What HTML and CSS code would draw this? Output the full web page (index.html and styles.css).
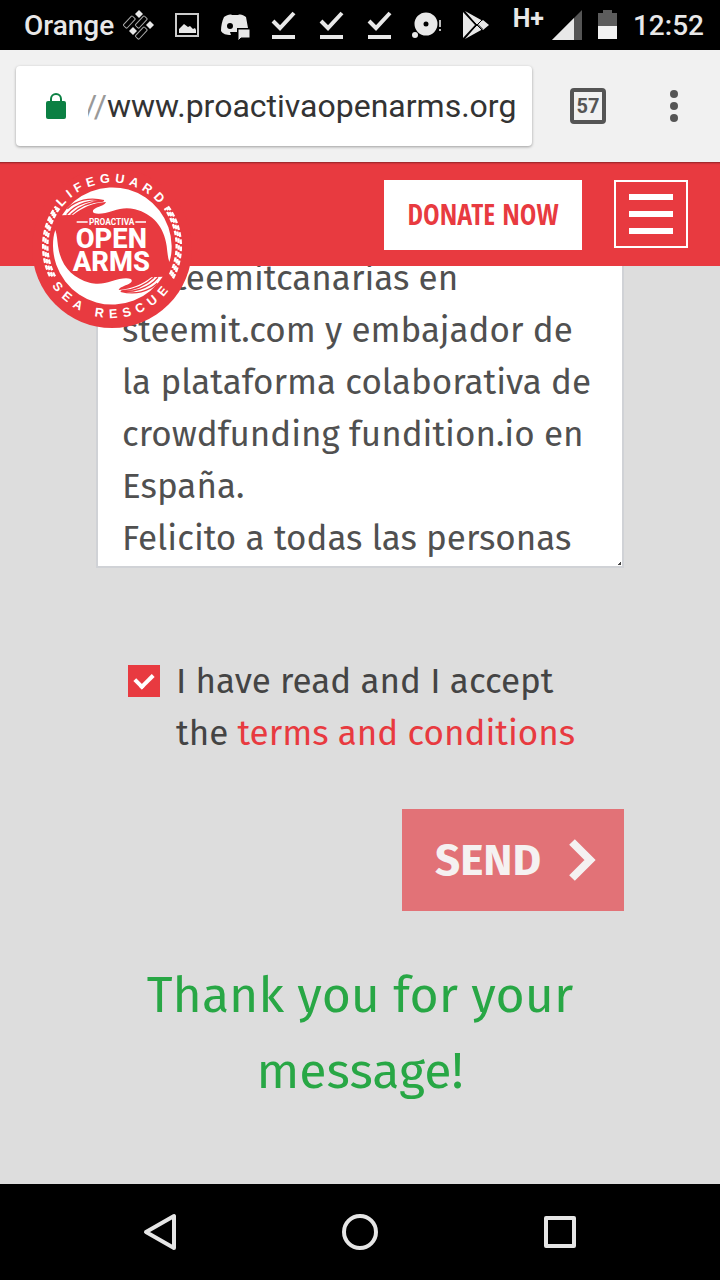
FILE: index.html
```html
<!DOCTYPE html>
<html lang="en">
<head>
    <meta charset="UTF-8">
    <meta name="viewport" content="width=device-width, initial-scale=1.0">
    <title>Proactiva Open Arms</title>
    <link rel="stylesheet" href="styles.css">
</head>
<body>

    <!-- Status bar -->
    <div class="status-bar">
        <span>Orange</span>
        <div class="status-icons">
            <svg viewBox="0 0 32 32" width="32" height="32">
                <g fill="none" stroke="#aaa" stroke-width="1">
                    <rect x="-3" y="-6" width="5" height="13" rx="1" transform="translate(7 13) rotate(43)"/>
                    <rect x="-3" y="-6" width="5" height="13" rx="1" transform="translate(19 13) rotate(43)"/>
                    <rect x="-3" y="-6" width="5" height="13" rx="1" transform="translate(19 24) rotate(43)"/>
                </g>
                <path fill="#e8e8e8" d="M16 1l4 4-4 4-4-4zM27 12l4 4-4 4-4-4zM10 18l4 4-4 4-4-4z"/>
            </svg>
            <svg viewBox="0 0 32 32" width="32" height="32">
                <rect x="5" y="5" width="22" height="22" fill="none" stroke="#ccc" stroke-width="2"/>
                <path fill="#e8e8e8" d="M8 24v-4l5-5 4 3 2-1 3 3 2-1 1 2v3z"/>
            </svg>
            <svg viewBox="0 0 32 32" width="32" height="32">
                <path fill="#e8e8e8" fill-rule="evenodd" d="M5 8c3-2 6-3 8-2h6c3-1 5 0 8 2l2 11H18v4h-7l1 3c-5 0-8-1-10-4 0-5 1-10 3-14zM11 14a3 3 0 0 0 0 6 3 3 0 0 0 0-6z"/>
                <path fill="#e8e8e8" stroke="#000" d="M19 20h12v9H22l-3 3z"/>
            </svg>
            <svg viewBox="0 0 32 32" width="32" height="32">
                <path d="M6 12l7 7L27 4" fill="none" stroke="#e8e8e8" stroke-width="4"/>
                <path d="M5 26h23v4H5z" fill="#e8e8e8"/>
            </svg>
            <svg viewBox="0 0 32 32" width="32" height="32">
                <path d="M6 12l7 7L27 4" fill="none" stroke="#e8e8e8" stroke-width="4"/>
                <path d="M5 26h23v4H5z" fill="#e8e8e8"/>
            </svg>
            <svg viewBox="0 0 32 32" width="32" height="32">
                <path d="M6 12l7 7L27 4" fill="none" stroke="#e8e8e8" stroke-width="4"/>
                <path d="M5 26h23v4H5z" fill="#e8e8e8"/>
            </svg>
            <svg viewBox="0 0 32 32" width="32" height="32">
                <circle cx="15" cy="15" r="7" fill="none" stroke="#e8e8e8" stroke-width="9"/>
                <circle cx="4" cy="26" r="3" fill="#e8e8e8"/>
                <path d="M28 11h2v7h-2zM28 20h2v2h-2z" fill="#bbb"/>
            </svg>
            <svg viewBox="0 0 32 32" width="32" height="32">
                <path fill="#e8e8e8" d="M4 3v26l12-13zM6 2l18 10-5 5zM6 30l18-10-5-5zM24 11l6 5-6 5-5-5z"/>
                <path d="M4 2l20 20M4 30l20-20" stroke="#000" stroke-width="1"/>
            </svg>
        </div>
        <div class="status-right">
            <span class="network">H+</span>
            <svg viewBox="0 0 30 30" width="30" height="30">
                <path fill="#555" d="M30 0v30H0z"/>
                <path fill="#e8e8e8" d="M22 8v22H0z"/>
            </svg>
            <svg viewBox="0 0 19 30" width="19" height="30">
                <path fill="#5c5c5c" d="M0 3h5V0h9v3h5v13H0z"/>
                <path fill="#f2f2f2" d="M0 16h19v13H0z"/>
            </svg>
            <span>12:52</span>
        </div>
    </div>

    <!-- Browser toolbar -->
    <div class="toolbar">
        <div class="address">
            <svg viewBox="0 0 20 26" width="20" height="26">
                <rect x="0" y="8" width="20" height="18" rx="2" fill="#0b8043"/>
                <path d="M5 9V6a5 5 0 0 1 10 0v3" fill="none" stroke="#0b8043" stroke-width="2"/>
            </svg>
            <label for="url">//</label>
            <input type="text" id="url" value="www.proactivaopenarms.org">
        </div>
        <button class="tabs">57</button>
        <button class="more" aria-label="More">
            <svg viewBox="0 0 8 32" width="8" height="32">
                <g fill="#555"><circle cx="4" cy="4" r="4"/><circle cx="4" cy="16" r="4"/><circle cx="4" cy="28" r="4"/></g>
            </svg>
        </button>
    </div>

    <header>
        <a href="#" class="logo" aria-label="Proactiva Open Arms">
            <svg viewBox="36 24 480 480" width="160" height="160">
                <defs>
                    <path id="ring-top" d="M86 258a190 190 0 0 1 380 0"/>
                    <path id="ring-bottom" d="M60 258a216 216 0 0 0 432 0"/>
                    <g id="hand">
                        <path fill="#fff" d="M126 166A178 178 0 0 1 455 258c0 20-2 34-7 48-5-14-6-32-8-48-8-58-42-96-95-110-25-7-45-2-65 4-25 8-45 12-58 7-7-5-2-11 6-15 12-6 27-9 30-18-40 2-72 18-98 38z"/>
                        <path fill="none" stroke="#e83a40" stroke-width="4" d="M250 122c-34-4-82 8-110 42M250 123c-40 2-74 18-98 41M252 122c-44-12-84 0-110 24"/>
                    </g>
                </defs>
                <circle cx="276" cy="264" r="240" fill="#e83a40"/>
                <text class="ring-text"><textPath href="#ring-top" startOffset="50%">LIFEGUARD</textPath></text>
                <text class="ring-text wide"><textPath href="#ring-bottom" startOffset="50%">SEA RESCUE</textPath></text>
                <g class="rope">
                    <path pathLength="64" stroke-dashoffset="0" d="M118 145a194 194 0 0 0-13 204"/>
                    <path pathLength="64" stroke-dashoffset="1" d="M113 142a200 200 0 0 0-14 210"/>
                    <path pathLength="64" stroke-dashoffset="2" d="M108 139a206 206 0 0 0-15 216"/>
                    <path pathLength="64" stroke-dashoffset="2" d="M434 145a194 194 0 0 1 13 204"/>
                    <path pathLength="64" stroke-dashoffset="1" d="M439 142a200 200 0 0 1 14 210"/>
                    <path pathLength="64" stroke-dashoffset="0" d="M444 139a206 206 0 0 1 15 216"/>
                </g>
                <use href="#hand"/>
                <use href="#hand" transform="rotate(180 277 258)"/>
                <path d="M170 186h33M346 186h32" stroke="#fff" stroke-width="4"/>
                <text class="name-small" x="275" y="195">PROACTIVA</text>
                <text class="name" x="274" y="265">OPEN</text>
                <text class="name" x="274" y="332">ARMS</text>
            </svg>
        </a>
        <a href="#" class="donate">DONATE NOW</a>
        <button class="menu" aria-label="Menu">
            <span></span>
            <span></span>
            <span></span>
        </button>
    </header>

    <main>
        <form id="contact-form">
            <textarea id="message" aria-label="Message" rows="6">@steemitcanarias en steemit.com y embajador de la plataforma colaborativa de crowdfunding fundition.io en España.
Felicito a todas las personas</textarea>

            <div class="accept">
                <input type="checkbox" id="terms" checked>
                <label for="terms">I have read and I accept the <a href="#">terms and conditions</a></label>
            </div>

            <button type="submit" class="send">
                SEND
                <svg viewBox="0 0 28 44" width="28" height="44">
                    <path d="M4 4l18 18L4 40" fill="none" stroke="#f5f1f1" stroke-width="8"/>
                </svg>
            </button>

            <p class="thanks">Thank you for your message!</p>
        </form>
    </main>

    <!-- Navigation keys -->
    <nav>
        <button aria-label="Back">
            <svg viewBox="0 0 40 40" width="40" height="40"><path d="M34 4v32L6 20z"/></svg>
        </button>
        <button aria-label="Home">
            <svg viewBox="0 0 40 40" width="40" height="40"><circle cx="20" cy="20" r="16"/></svg>
        </button>
        <button aria-label="Recent apps">
            <svg viewBox="0 0 40 40" width="40" height="40"><rect x="6" y="6" width="28" height="28"/></svg>
        </button>
    </nav>

</body>
</html>
```
FILE: styles.css
```css
* {
    box-sizing: border-box;
}
body {
    font-family: "Fira Sans", "Noto Sans", sans-serif;
    margin: 0;
    min-height: 100vh;
    display: flex;
    flex-direction: column;
    background-color: #ddd;
}
button {
    border: none;
    padding: 0;
    background: none;
    cursor: pointer;
}
svg {
    display: block;
}
a {
    color: #e83a40;
    text-decoration: none;
}

/* status bar */
.status-bar {
    display: flex;
    align-items: center;
    gap: 9px;
    height: 50px;
    padding: 0 16px 0 24px;
    background-color: #000;
    color: #e8e8e8;
    font: 500 28px Roboto, sans-serif;
}
.status-icons {
    display: flex;
    gap: 16px;
}
.status-right {
    display: flex;
    align-items: center;
    gap: 16px;
    margin-left: auto;
}
.network {
    align-self: flex-start;
    margin-right: -8px;
    font-size: 25px;
    line-height: 20px;
    font-weight: 700;
}

/* toolbar */
.toolbar {
    display: flex;
    align-items: center;
    padding: 16px 40px 16px 16px;
    background-color: #f1f1f1;
}
.address {
    flex: 1;
    display: flex;
    align-items: center;
    height: 80px;
    padding: 0 12px 0 30px;
    background-color: #fff;
    border-radius: 4px;
    box-shadow: 0 1px 3px rgba(0, 0, 0, 0.35);
    font: 32px Roboto, sans-serif;
}
.address label {
    display: flex;
    justify-content: flex-end;
    width: 19px;
    margin-left: 22px;
    overflow: hidden;
    color: #999;
}
.address input {
    flex: 1;
    min-width: 0;
    border: none;
    padding: 0;
    font: inherit;
    color: #333;
}
.tabs {
    width: 36px;
    height: 36px;
    margin: 0 62px 0 38px;
    border: 4px solid #555;
    border-radius: 4px;
    font: 700 20px Roboto, sans-serif;
    color: #555;
}
.more {
    padding: 8px 2px;
}

/* header */
header {
    position: relative;
    z-index: 1;
    display: flex;
    justify-content: flex-end;
    align-items: flex-start;
    gap: 32px;
    height: 104px;
    padding: 18px 32px;
    background-color: #e83a40;
    box-shadow: inset 0 3px 2px -2px rgba(0, 0, 0, 0.4);
}
.logo {
    position: absolute;
    left: 32px;
    top: 6px;
}
.ring-text {
    font: 700 38px "Liberation Sans", sans-serif;
    letter-spacing: 14px;
    text-anchor: middle;
    fill: #fff;
}
.wide {
    letter-spacing: 18px;
}
.rope {
    fill: none;
    stroke: #fff;
    stroke-width: 7;
    stroke-dasharray: 4 2;
}
.name-small {
    font: 700 25px Roboto, sans-serif;
    text-anchor: middle;
    fill: #fff;
}
.name {
    font: 800 82px Roboto, sans-serif;
    text-anchor: middle;
    fill: #fff;
}
.donate {
    width: 198px;
    height: 70px;
    background-color: #fff;
    font: 700 28px/68px "Open Sans Condensed", "Liberation Sans Narrow", "Open Sans", sans-serif;
    text-align: center;
}
.menu {
    display: flex;
    flex-direction: column;
    justify-content: center;
    align-items: center;
    gap: 11px;
    width: 74px;
    height: 68px;
    border: 2px solid #fff;
}
.menu span {
    width: 44px;
    height: 6px;
    background-color: #fff;
}

/* contact form */
main {
    flex: 1;
    padding: 0 96px;
}
#contact-form {
    display: flex;
    flex-direction: column;
}
#message {
    display: block;
    width: 100%;
    height: 326px;
    margin: -24px 0 87px;
    padding: 8px 24px 0;
    border: 2px solid #d0d2d6;
    overflow: hidden;
    resize: none;
    background: #fff linear-gradient(135deg, transparent 50%, #444 50%) no-repeat right 1px bottom 1px / 3px 3px;
    font: 35px/52px "Fira Sans", "Noto Sans", sans-serif;
    color: #505050;
}
.accept {
    display: flex;
    align-items: flex-start;
    gap: 16px;
    padding: 0 32px;
    font-size: 35px;
    line-height: 52px;
    color: #444;
}
.accept input {
    flex: none;
    display: grid;
    place-items: center;
    width: 32px;
    height: 32px;
    margin: 10px 0 0;
    appearance: none;
    background-color: #e83a40;
}
.accept input:checked::before {
    content: "";
    width: 14px;
    height: 8px;
    border: solid #fff;
    border-width: 0 0 4px 4px;
    transform: translateY(-2px) rotate(-45deg);
}
.send {
    align-self: flex-end;
    display: flex;
    align-items: center;
    justify-content: space-between;
    width: 222px;
    height: 102px;
    margin-top: 50px;
    padding: 0 28px 0 33px;
    background-color: #e27277;
    color: #f5f1f1;
    font: 700 44px "Fira Sans", "Noto Sans", sans-serif;
}
.thanks {
    margin: 46px 0;
    font-size: 50px;
    line-height: 76px;
    text-align: center;
    color: #28a745;
}

/* navigation keys */
nav {
    display: flex;
    justify-content: center;
    gap: 160px;
    padding: 28px 0;
    background-color: #000;
}
nav svg {
    fill: none;
    stroke: #e6e6e6;
    stroke-width: 4;
    stroke-linejoin: round;
}
```
